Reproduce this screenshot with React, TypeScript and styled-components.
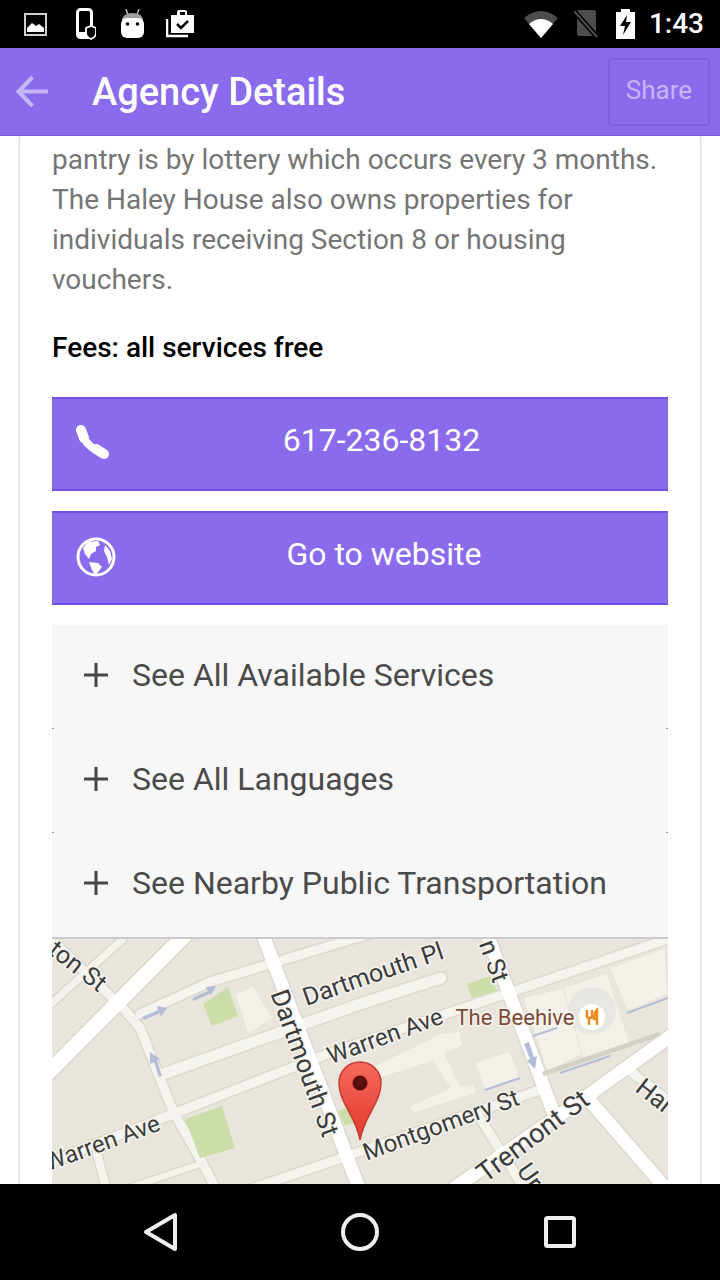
import React from "react";
import styled, { createGlobalStyle } from "styled-components";

const GlobalStyle = createGlobalStyle`
  html, body {
    margin: 0;
    padding: 0;
    background: #000;
  }
  * {
    box-sizing: border-box;
  }
`;

const Shell = styled.div`
  width: 720px;
  height: 1280px;
  display: flex;
  flex-direction: column;
  overflow: hidden;
  background: #fff;
  font-family: Roboto, "Liberation Sans", sans-serif;
`;

const StatusBar = styled.div`
  height: 48px;
  flex: none;
  background: #000;
  display: flex;
  align-items: center;
  padding: 0 16px 0 24px;
  color: #fff;
`;

const StatusGroup = styled.div`
  display: flex;
  align-items: center;
`;

const StatusSpacer = styled.div`
  flex: 1;
`;

const StatusIcon = styled.svg<{ $gap: number }>`
  display: block;
  flex: none;
  margin-right: ${(p) => p.$gap}px;
`;

const Clock = styled.span`
  font-size: 28px;
  font-weight: 500;
  line-height: 48px;
`;

const AppBar = styled.header`
  height: 88px;
  flex: none;
  background: #8a6beb;
  border-bottom: 1px solid #7356e4;
  display: flex;
  align-items: center;
  padding: 0 10px 0 16px;
`;

const Title = styled.h1`
  flex: 1;
  margin: 0 0 0 43px;
  color: #fff;
  font-size: 38px;
  font-weight: 500;
  line-height: 44px;
`;

const ShareButton = styled.div`
  width: 102px;
  height: 68px;
  margin-top: 1px;
  padding-bottom: 4px;
  border: 2px solid #7d5fe6;
  border-radius: 4px;
  color: #c5b6f6;
  font-size: 26px;
  display: flex;
  align-items: center;
  justify-content: center;
`;

const Main = styled.main`
  flex: 1;
  min-height: 0;
  overflow: hidden;
  background: #fff;
`;

const Card = styled.section`
  margin: 0 20px;
  padding: 4px 32px 0;
  background: #fff;
  box-shadow: 0 0 3px rgba(0, 0, 0, 0.35);
  height: 1200px;
`;

const Description = styled.p`
  margin: 0;
  color: #757575;
  font-size: 28px;
  line-height: 40px;
`;

const Fees = styled.p`
  margin: 28px 0 29px;
  color: #000;
  font-size: 28px;
  font-weight: 500;
  line-height: 40px;
`;

const ActionButton = styled.div<{ $inset: number }>`
  position: relative;
  height: 94px;
  margin-bottom: 20px;
  padding: 0 0 8px ${(p) => p.$inset}px;
  background: #8a6beb;
  border-top: 2px solid #6f52e3;
  border-bottom: 2px solid #6f52e3;
  color: #fff;
  font-size: 32px;
  display: flex;
  align-items: center;
  justify-content: center;
`;

const ActionIcon = styled.svg`
  position: absolute;
  left: 24px;
  top: calc(50% - 1px);
  transform: translateY(-50%);
`;

const Accordion = styled.div`
  background: #f7f7f7;
  border-bottom: 2px solid #c9c9c9;
`;

const AccordionItem = styled.div`
  position: relative;
  height: 104px;
  display: flex;
  align-items: center;
  padding: 0 0 4px 32px;
  gap: 24px;
  color: #4a4a4a;
  font-size: 32px;
  &:not(:last-child)::before,
  &:not(:last-child)::after {
    content: "";
    position: absolute;
    bottom: 0;
    width: 2px;
    height: 1px;
    background: #9a9a9a;
  }
  &::before {
    left: 0;
  }
  &::after {
    right: 0;
  }
`;

const MapFrame = styled.div`
  height: 260px;
  background: #e9e5dc;
`;

const MapText = styled.text<{ $size?: number; $color?: string }>`
  font-family: Roboto, "Liberation Sans", sans-serif;
  font-size: ${(p) => p.$size ?? 24}px;
  fill: ${(p) => p.$color ?? "#3b3b3b"};
  stroke: #f6f4ef;
  stroke-width: 3px;
  paint-order: stroke;
  text-anchor: middle;
  dominant-baseline: central;
`;

const NavBar = styled.nav`
  height: 96px;
  flex: none;
  background: #000;
  display: flex;
  align-items: center;
  justify-content: space-between;
  padding: 0 143px;
`;

const roads: [string, number, string][] = [
  ["M52 1002 L123 938", 7, "#f5f3ee"],
  ["M40 928 L123 1007 L140 1027 L173 1110 L203 1163 L217 1190", 9, "#f5f3ee"],
  ["M140 1013 L210 981 L280 960 L372 932", 9, "#f5f3ee"],
  ["M163 1073 L360 1003 L441 977", 11, "#f5f3ee"],
  ["M40 1165 L173 1113 L327 1053 L668 938", 9, "#f5f3ee"],
  ["M97 1153 L107 1190", 8, "#f5f3ee"],
  ["M120 1190 L203 1162", 6, "#f5f3ee"],
  ["M245 1190 L537 1090", 9, "#f5f3ee"],
  ["M480 1117 L526 1190", 9, "#f5f3ee"],
  ["M630 1070 L675 1105", 9, "#f5f3ee"],
  ["M40 1080 L185 934", 15, "#fff"],
  ["M263 934 L360 1190", 13, "#fff"],
  ["M486 930 L552 1108", 13, "#fff"],
  ["M590 1100 L668 1190", 13, "#fff"],
  ["M672 1034 L590 1093 L450 1190", 13, "#fff"],
];

const greens = [
  "203,1003 228,986 238,1015 212,1025",
  "185,1118 222,1105 235,1147 200,1157",
  "338,1110 355,1105 358,1120 345,1125",
  "467,983 490,975 497,990 472,997",
];

const buildings = [
  "235,993 253,985 273,1017 248,1033",
  "370,1067 440,1033 460,1030 463,1045 445,1052 460,1085 475,1083 475,1093 413,1112 410,1105 450,1087 433,1060 380,1077",
  "475,1062 510,1050 520,1077 485,1090",
  "523,997 563,987 583,1053 547,1070",
  "563,987 607,972 630,1043 583,1057",
  "610,967 665,947 668,993 627,1010",
];

const MapView = () => (
  <svg width="616" height="260" viewBox="52 938 616 260" style={{ display: "block" }}>
    <rect x="52" y="938" width="616" height="260" fill="#e9e5dc" />
    {roads.map(([d, w]) => (
      <path key={d + "c"} d={d} fill="none" stroke="#dcd8cd" strokeWidth={w + 3} strokeLinecap="round" strokeLinejoin="round" />
    ))}
    {roads.map(([d, w, c]) => (
      <path key={d} d={d} fill="none" stroke={c} strokeWidth={w} strokeLinecap="round" strokeLinejoin="round" />
    ))}
    {greens.map((p) => (
      <polygon key={p} points={p} fill="#cbdda8" />
    ))}
    {buildings.map((p) => (
      <polygon key={p} points={p} fill="#f2f0e9" stroke="#e6e3da" strokeWidth="1" />
    ))}
    <circle cx="592" cy="1010" r="24" fill="#e2e2de" opacity="0.7" />
    <path d="M543 1073 L660 1033" stroke="#d3d0c5" strokeWidth="5" />
    <g fill="none" stroke="#b4bdd8" strokeWidth="2">
      <path d="M627 1012 L668 997" />
      <path d="M533 1035 L557 1027" />
      <path d="M485 1089 L520 1077" />
      <path d="M560 1072 L610 1055" />
    </g>
    <g fill="#b4bdd8">
      <path d="M142 1016 L158 1009 L157 1005 L167 1007 L161 1016 L160 1012 L144 1019 Z" />
      <path d="M192 997 L208 990 L206 986 L216 985 L211 994 L209 993 L194 1000 Z" />
      <path d="M159 1076 L154 1061 L150 1063 L150 1051 L160 1058 L157 1059 L162 1075 Z" />
      <path d="M524 1043 L529 1041 L534 1056 L537 1055 L535 1068 L527 1060 L530 1058 Z" />
    </g>
    <MapText x="78" y="965" $size={25} transform="rotate(38 78 965)">ton St</MapText>
    <MapText x="373" y="973" $size={25} transform="rotate(-19 373 973)">Dartmouth Pl</MapText>
    <MapText x="305" y="1062" $size={26} transform="rotate(70 305 1062)">Dartmouth St</MapText>
    <MapText x="385" y="1035" transform="rotate(-20 385 1035)">Warren Ave</MapText>
    <MapText x="102" y="1142" transform="rotate(-20 102 1142)">Warren Ave</MapText>
    <MapText x="441" y="1124" transform="rotate(-20 441 1124)">Montgomery St</MapText>
    <MapText x="533" y="1135" $size={27} transform="rotate(-37 533 1135)">Tremont St</MapText>
    <MapText x="655" y="1095" $size={25} transform="rotate(38 655 1095)">Har</MapText>
    <MapText x="530" y="1175" $size={25} transform="rotate(55 530 1175)">Ur</MapText>
    <MapText x="494" y="960" $size={25} transform="rotate(70 494 960)">n St</MapText>
    <MapText x="515" y="1016" $size={22} $color="#7d4a3a">The Beehive</MapText>
    <circle cx="592" cy="1016" r="13" fill="#fff" />
    <g stroke="#f08a1d" fill="none" strokeWidth="2.5">
      <path d="M587 1009 V1015 Q587 1017 589 1017 V1024" />
      <path d="M592 1009 V1015 Q592 1017 590 1017" />
      <path d="M597 1024 V1009 Q594 1012 594 1018 H597" />
    </g>
    <defs>
      <linearGradient id="pin" x1="0" y1="0" x2="0" y2="1">
        <stop offset="0" stopColor="#f6695e" />
        <stop offset="1" stopColor="#e2382b" />
      </linearGradient>
    </defs>
    <path
      d="M360 1139 C356 1115 339 1102 339 1082 A21 21 0 0 1 381 1082 C381 1102 364 1115 360 1139 Z"
      fill="url(#pin)"
      stroke="#c23a2d"
      strokeWidth="1.5"
    />
    <circle cx="360" cy="1082" r="7.5" fill="#5a0f0a" />
  </svg>
);

const App: React.FC = () => (
  <Shell>
    <GlobalStyle />
    <StatusBar>
      <StatusGroup>
        <StatusIcon $gap={29} width="23" height="24" viewBox="0 0 23 24">
          <rect x="1" y="2" width="21" height="21" fill="none" stroke="#cfcfcf" strokeWidth="2" />
          <path d="M3 20 V16 L8 11 L12 14 L15 12 L20 16 V20 Z" fill="#fff" />
        </StatusIcon>
        <StatusIcon $gap={25} width="20" height="32" viewBox="0 0 20 32">
          <rect x="1.5" y="1.5" width="14" height="28" rx="3" fill="none" stroke="#fff" strokeWidth="3" />
          <rect x="1" y="24" width="15" height="6" rx="2" fill="#fff" />
          <path d="M15 18 L20 20 V25 Q20 29 15 31 Q10 29 10 25 V20 Z" fill="#000" stroke="#fff" strokeWidth="1.8" />
        </StatusIcon>
        <StatusIcon $gap={22} width="23" height="30" viewBox="0 0 23 30">
          <path d="M5 0 L7 6 M18 0 L16 6" stroke="#bdbdbd" strokeWidth="1.5" />
          <path d="M1 12 Q1 4 11.5 4 Q22 4 22 12 Z" fill="#9e9e9e" />
          <rect x="0" y="9" width="23" height="20" rx="6" fill="#fff" />
          <circle cx="6.5" cy="15" r="1.8" fill="#000" />
          <circle cx="16.5" cy="15" r="1.8" fill="#000" />
        </StatusIcon>
      </StatusGroup>
      <StatusIcon $gap={0} width="29" height="30" viewBox="0 0 29 30">
        <path d="M1 10 V27 H22" fill="none" stroke="#fff" strokeWidth="2.5" />
        <path d="M5 6 H11 V3 Q11 1 13 1 H19 Q21 1 21 3 V6 H28 V24 H5 Z" fill="#fff" />
        <rect x="14" y="3" width="5" height="3" fill="#000" />
        <path d="M11 15 L15 19 L22 12" fill="none" stroke="#000" strokeWidth="2.5" />
      </StatusIcon>
      <StatusSpacer />
      <StatusIcon $gap={16} width="34" height="28" viewBox="0 0 34 28">
        <path d="M0 8 Q17 -6 34 8 L17 28 Z" fill="#4d4d4d" />
        <path d="M5 14 Q17 4 29 14 L17 28 Z" fill="#fff" />
      </StatusIcon>
      <StatusIcon $gap={18} width="24" height="28" viewBox="0 0 24 28">
        <path d="M3 2 Q3 0 5 0 H20 Q22 0 22 2 V24 Q22 26 20 26 H5 Q3 26 3 24 Z" fill="#4d4d4d" />
        <path d="M0 1 L23 27" stroke="#000" strokeWidth="5" />
        <path d="M0 1 L23 27" stroke="#4d4d4d" strokeWidth="2" />
      </StatusIcon>
      <StatusIcon $gap={14} width="19" height="30" viewBox="0 0 19 30">
        <path d="M5 0 H14 V3 H19 V30 H0 V3 H5 Z" fill="#fff" />
        <path d="M11 6 L4 17 H9 L7 26 L15 13 H10 Z" fill="#000" />
      </StatusIcon>
      <Clock>1:43</Clock>
    </StatusBar>
    <AppBar>
      <svg width="33" height="33" viewBox="0 0 33 33" style={{ flex: "none" }}>
        <path d="M32 16.5 H3 M16.5 2 L2.5 16.5 L16.5 31" fill="none" stroke="#c5b6f6" strokeWidth="4" />
      </svg>
      <Title>Agency Details</Title>
      <ShareButton>Share</ShareButton>
    </AppBar>
    <Main>
      <Card>
        <Description>
          pantry is by lottery which occurs every 3 months.
          <br />
          The Haley House also owns properties for
          <br />
          individuals receiving Section 8 or housing
          <br />
          vouchers.
        </Description>
        <Fees>Fees: all services free</Fees>
        <ActionButton $inset={43}>
          <ActionIcon width="34" height="36" viewBox="0 0 34 36">
            <path d="M6 7 C8 16 15 24 27 28" fill="none" stroke="#fff" strokeWidth="8" />
            <path d="M5 5 L8 13 M20 24 L28 29" fill="none" stroke="#fff" strokeWidth="10" strokeLinecap="round" />
          </ActionIcon>
          617-236-8132
        </ActionButton>
        <ActionButton $inset={48}>
          <ActionIcon width="40" height="40" viewBox="0 0 40 40">
            <circle cx="20" cy="20" r="18" fill="none" stroke="#fff" strokeWidth="3" />
            <path d="M12 5 L22 4 L24 8 L20 10 L20 14 L15 17 L13 22 L9 17 L7 11 Z" fill="#fff" />
            <path d="M13 25 L22 26 L26 30 L22 35 L19 38 L16 33 Z" fill="#fff" />
            <path d="M29 8 L34 14 L36 22 L33 28 L31 20 L28 14 Z" fill="#fff" />
          </ActionIcon>
          Go to website
        </ActionButton>
        <Accordion>
          {["See All Available Services", "See All Languages", "See Nearby Public Transportation"].map((label) => (
            <AccordionItem key={label}>
              <svg width="24" height="24" viewBox="0 0 24 24" style={{ flex: "none" }}>
                <path d="M0 12 H24 M12 0 V24" stroke="#444" strokeWidth="3" />
              </svg>
              {label}
            </AccordionItem>
          ))}
        </Accordion>
        <MapFrame>
          <MapView />
        </MapFrame>
      </Card>
    </Main>
    <NavBar>
      <svg width="34" height="40" viewBox="0 0 34 40">
        <path d="M32 3 V37 L3 20 Z" fill="none" stroke="#eee" strokeWidth="4" strokeLinejoin="round" />
      </svg>
      <svg width="38" height="38" viewBox="0 0 38 38">
        <circle cx="19" cy="19" r="17" fill="none" stroke="#eee" strokeWidth="4" />
      </svg>
      <svg width="34" height="34" viewBox="0 0 34 34">
        <rect x="3" y="3" width="28" height="28" rx="1.5" fill="none" stroke="#eee" strokeWidth="4" />
      </svg>
    </NavBar>
  </Shell>
);

export default App;
